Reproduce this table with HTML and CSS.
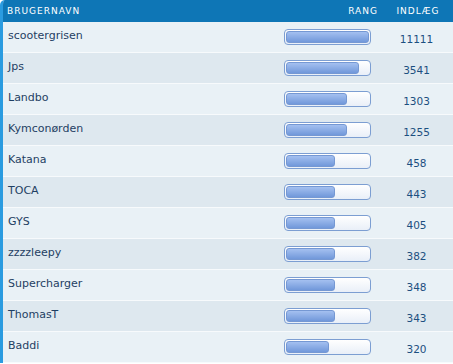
FILE: index.html
```html
<!DOCTYPE html>
<html>
<head>
<meta charset="utf-8">
<link rel="stylesheet" href="styles.css">
</head>
<body>
<div class="board">
  <div class="row head">
    <div class="h-name">Brugernavn</div>
    <div class="h-rank">Rang</div>
    <div class="h-posts">Indlæg</div>
  </div>
  <div class="row odd"><div class="c-name">scootergrisen</div><div class="c-rank"><div class="bar"><div class="fill" style="width:83px"></div></div></div><div class="c-posts">11111</div></div>
  <div class="row even"><div class="c-name">Jps</div><div class="c-rank"><div class="bar"><div class="fill" style="width:73px"></div></div></div><div class="c-posts">3541</div></div>
  <div class="row odd"><div class="c-name">Landbo</div><div class="c-rank"><div class="bar"><div class="fill" style="width:61px"></div></div></div><div class="c-posts">1303</div></div>
  <div class="row even"><div class="c-name">Kymconørden</div><div class="c-rank"><div class="bar"><div class="fill" style="width:61px"></div></div></div><div class="c-posts">1255</div></div>
  <div class="row odd"><div class="c-name">Katana</div><div class="c-rank"><div class="bar"><div class="fill" style="width:49px"></div></div></div><div class="c-posts">458</div></div>
  <div class="row even"><div class="c-name">TOCA</div><div class="c-rank"><div class="bar"><div class="fill" style="width:49px"></div></div></div><div class="c-posts">443</div></div>
  <div class="row odd"><div class="c-name">GYS</div><div class="c-rank"><div class="bar"><div class="fill" style="width:49px"></div></div></div><div class="c-posts">405</div></div>
  <div class="row even"><div class="c-name">zzzzleepy</div><div class="c-rank"><div class="bar"><div class="fill" style="width:49px"></div></div></div><div class="c-posts">382</div></div>
  <div class="row odd"><div class="c-name">Supercharger</div><div class="c-rank"><div class="bar"><div class="fill" style="width:49px"></div></div></div><div class="c-posts">348</div></div>
  <div class="row even"><div class="c-name">ThomasT</div><div class="c-rank"><div class="bar"><div class="fill" style="width:49px"></div></div></div><div class="c-posts">343</div></div>
  <div class="row odd"><div class="c-name">Baddi</div><div class="c-rank"><div class="bar"><div class="fill" style="width:43px"></div></div></div><div class="c-posts">320</div></div>
</div>
</body>
</html>
```
FILE: styles.css
```css
* { box-sizing: border-box; }
html, body { margin: 0; padding: 0; background: #ffffff; }
body { font-family: "DejaVu Sans", Verdana, sans-serif; font-size: 11px; }
.board {
  border-left: 3px solid #2a9be0;
  border-top-left-radius: 5px;
  overflow: hidden;
}
.row {
  display: grid;
  grid-template-columns: 277px 100px 73px;
  height: 31px;
  border-bottom: 1px solid #f7fafc;
  color: #1f3f63;
}
.row.head {
  height: 22px;
  border-bottom: none;
  background: #0e76b6;
  color: #ffffff;
  font-size: 9px;
  letter-spacing: 1px;
  text-transform: uppercase;
  line-height: 11px;
}
.head > div { padding-top: 6px; }
.h-name { padding-left: 4px; }
.h-rank { text-align: right; padding-right: 2px; }
.h-posts { text-align: center; padding-left: 3px; }
.odd { background: #e9f1f6; }
.even { background: #dee8ef; }
.c-name { padding-left: 5px; padding-top: 7px; }
.c-rank { display: flex; align-items: center; padding-left: 4px; }
.c-posts { text-align: center; padding-top: 11px; color: #1c4f80; font-size: 10.5px; }
.bar {
  width: 87px;
  height: 16px;
  border: 1px solid #7c9ed2;
  border-radius: 4px;
  background: linear-gradient(#ffffff, #e9eff8);
  padding: 1px;
}
.fill {
  height: 12px;
  border: 1px solid #7598d3;
  border-radius: 3px;
  background: linear-gradient(#a4c0f0, #7198da);
}
```
